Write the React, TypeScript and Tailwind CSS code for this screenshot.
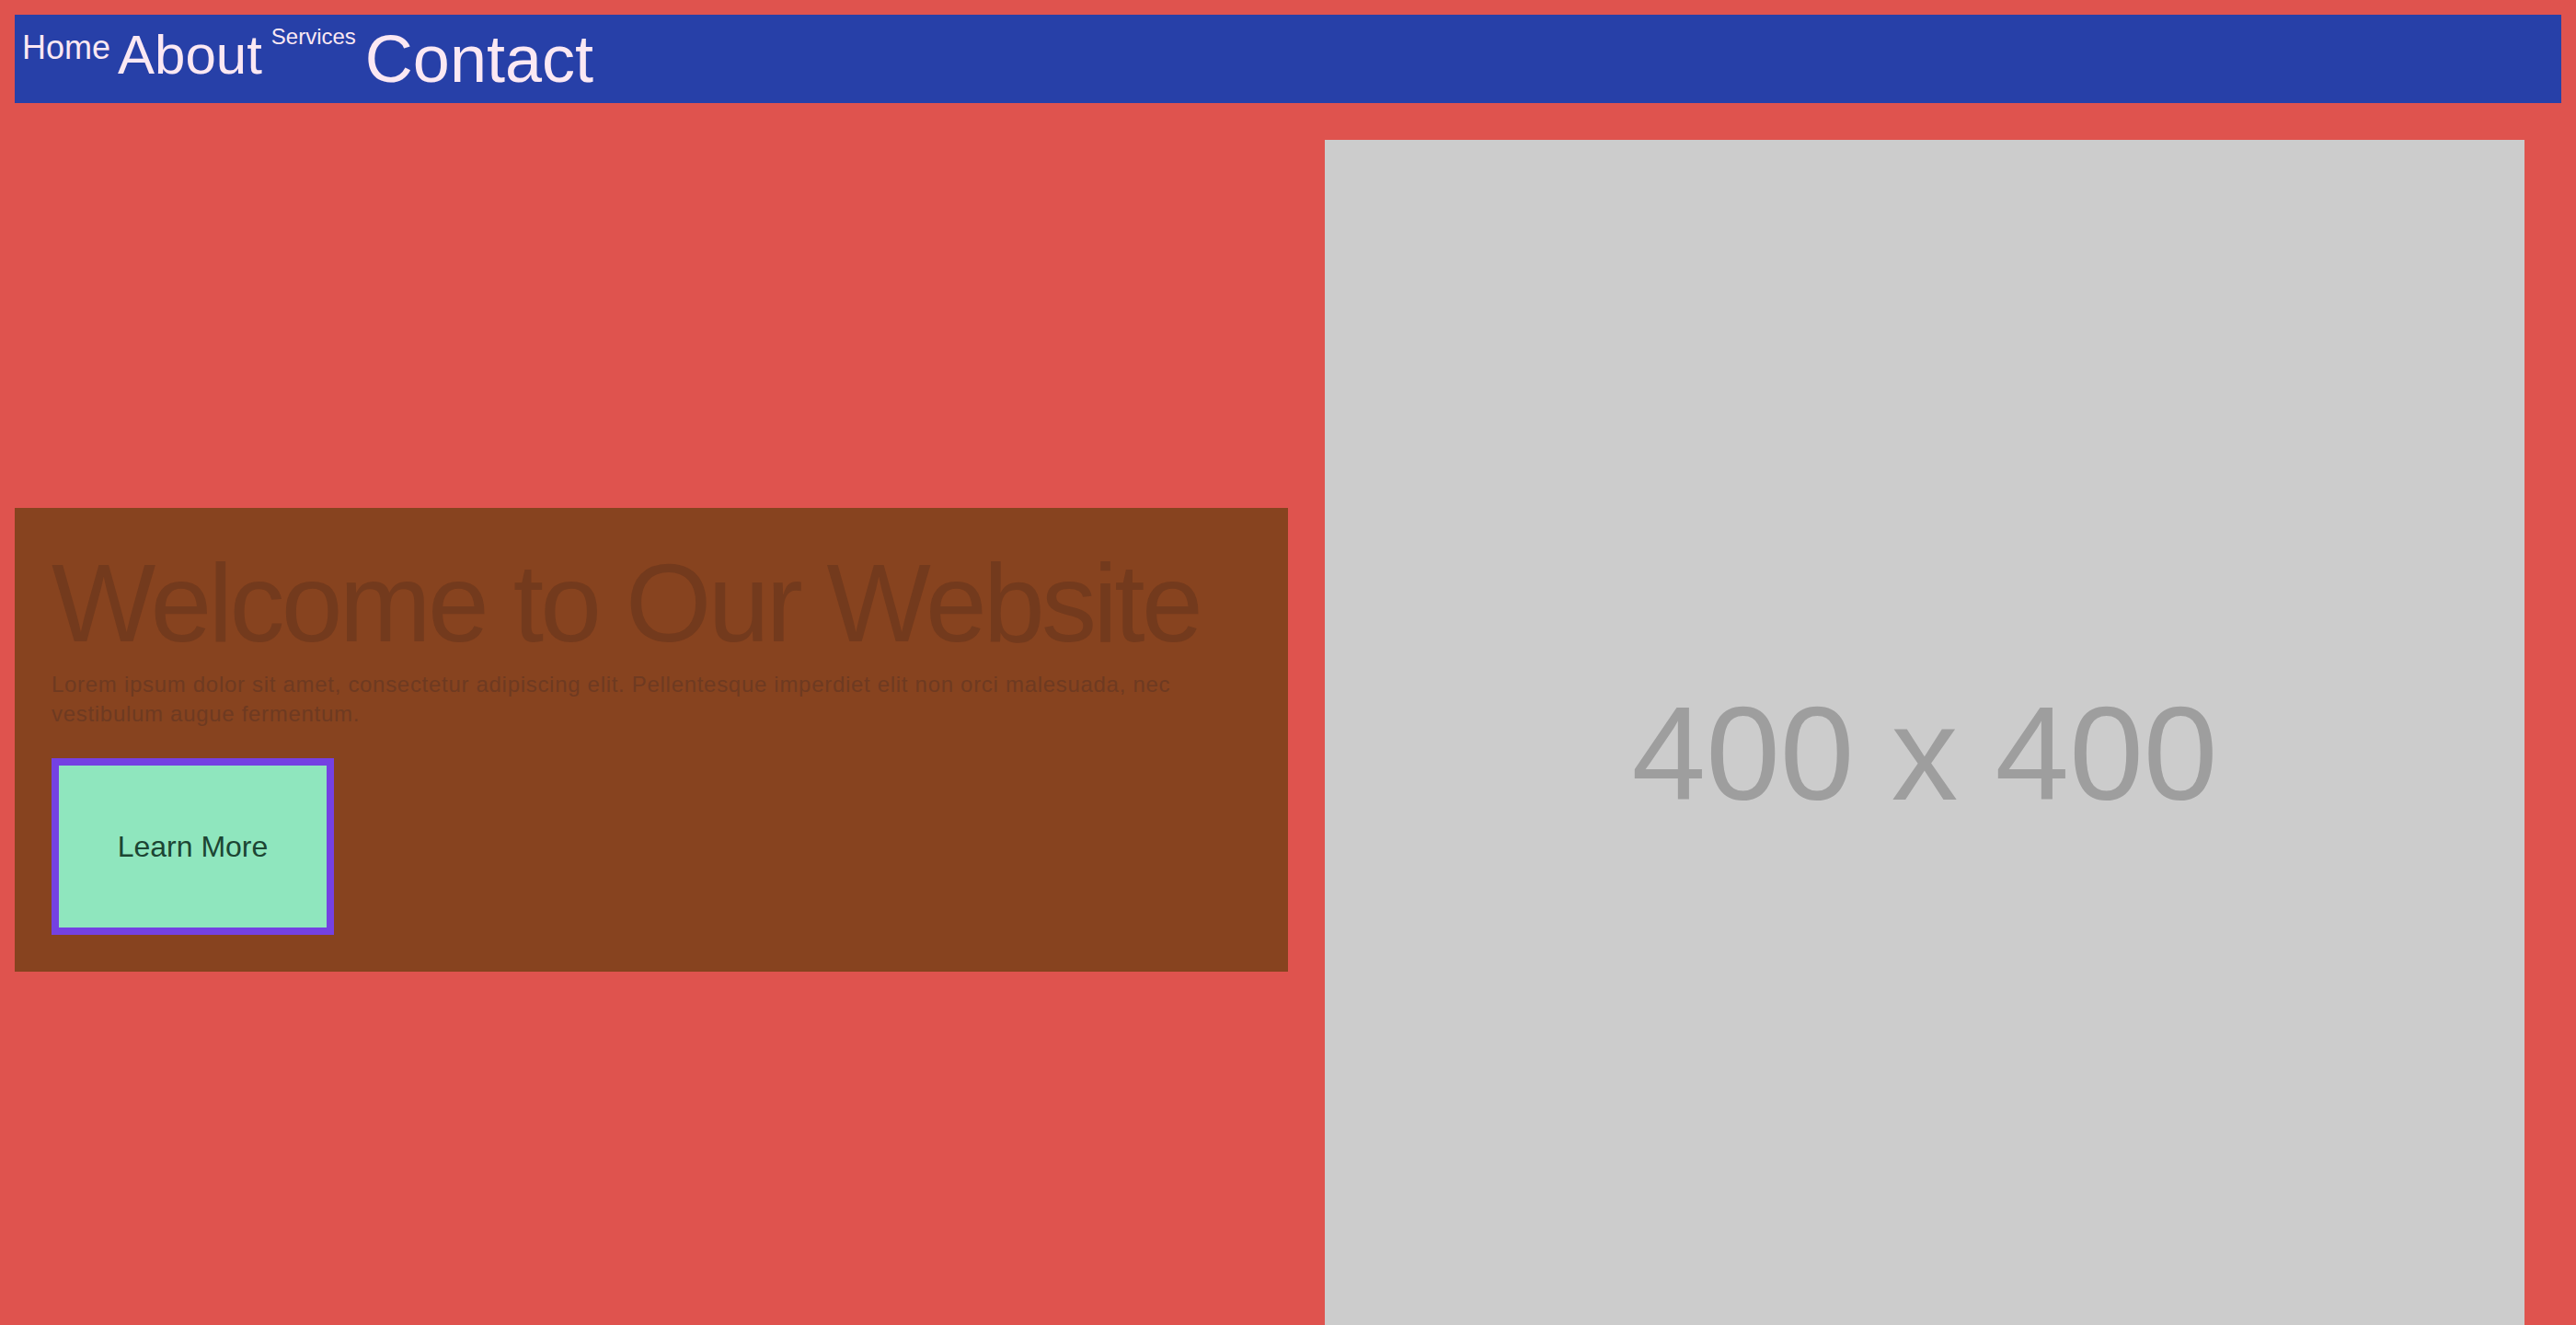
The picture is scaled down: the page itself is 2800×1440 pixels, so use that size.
export default function App() {
  return (
    <div className="min-h-screen bg-[#df534e] p-[16px] pt-[16px] font-['Liberation_Sans',Arial,sans-serif] overflow-hidden h-[1440px]">
      {/* top nav */}
      <nav className="flex items-start gap-[8px] bg-[#2740a8] p-[8px] h-[96px] text-[#fbe8f3]">
        <a className="text-[36px] leading-[56px]">Home</a>
        <a className="text-[60px] leading-[72px]">About</a>
        <a className="text-[24px] leading-[32px] pl-[2px]">Services</a>
        <a className="text-[72px] leading-[80px] pl-[2px]">Contact</a>
      </nav>

      {/* hero */}
      <main className="flex items-center gap-[40px] pt-[40px] pr-[40px]">
        <div className="flex-1 bg-[#87431f] px-[40px] pt-[43px] pb-[40px]">
          <h1 className="text-[120px] leading-[120px] tracking-[-3.7px] text-[#733a1d]">
            Welcome to Our Website
          </h1>
          <p className="mt-[13px] text-[24px] leading-[32px] tracking-[0.7px] text-[#6e3a21]">
            Lorem ipsum dolor sit amet, consectetur adipiscing elit. Pellentesque imperdiet elit non orci malesuada, nec vestibulum augue fermentum.
          </p>
          <button className="mt-[32px] flex w-[307px] h-[192px] items-center justify-center border-[8px] border-[#7441e2] bg-[#8fe6be] text-[32px] text-[#1c4533]">
            Learn More
          </button>
        </div>
        <div className="flex w-[1304px] h-[1304px] shrink-0 items-center justify-center bg-[#cccccc]">
          <span className="pt-[30px] text-[145px] leading-none text-[#9e9e9e]">400 x 400</span>
        </div>
      </main>
    </div>
  )
}
